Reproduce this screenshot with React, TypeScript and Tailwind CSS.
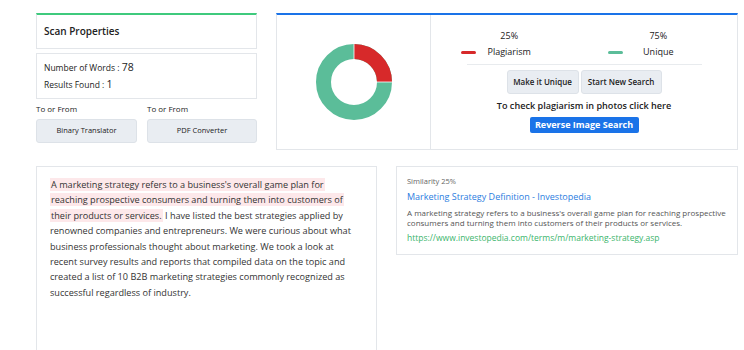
export default function App() {
  const r = 30.5;
  const c = 2 * Math.PI * r;
  return (
    <div className="h-[350px] overflow-hidden bg-white pl-[36px] pr-[6px] pt-[13px] text-[#222] font-['Open_Sans',sans-serif]">
      <div className="flex gap-[19px]">
        {/* left column */}
        <div className="w-[221px] flex flex-col">
          <div className="h-[36px] border border-[#e3e6ea] border-t-2 border-t-[#3fca7d] flex items-center px-[7px]">
            <span className="text-[10px] font-semibold">Scan Properties</span>
          </div>
          <div className="mt-[4px] h-[46px] border border-[#e3e6ea] px-[7px] flex flex-col justify-center text-[8.5px] font-medium leading-[17px]">
            <div>
              Number of Words : <span className="text-[10.5px]">78</span>
            </div>
            <div>
              Results Found : <span className="text-[10.5px]">1</span>
            </div>
          </div>
          <div className="mt-[4px] grid grid-cols-[101px_1fr] gap-x-[10px]">
            <div className="flex flex-col">
              <span className="text-[8px] leading-[12px]">To or From</span>
              <button className="mt-[4px] h-[24px] rounded-[3px] bg-[#e9edf2] border border-[#dde2e8] text-[7.5px] font-medium">
                Binary Translator
              </button>
            </div>
            <div className="flex flex-col">
              <span className="text-[8px] leading-[12px]">To or From</span>
              <button className="mt-[4px] h-[24px] rounded-[3px] bg-[#e9edf2] border border-[#dde2e8] text-[7.5px] font-medium">
                PDF Converter
              </button>
            </div>
          </div>
        </div>

        {/* right card */}
        <div className="flex-1 h-[137px] border border-[#e3e6ea] border-t-2 border-t-[#1a73e8] flex">
          <div className="w-[154px] border-r border-[#e3e6ea] flex items-center justify-center">
            <svg width="78" height="78" viewBox="0 0 78 78">
              <g transform="rotate(-90 39 39)">
                <circle cx="39" cy="39" r={r} fill="none" stroke="#5bbd99" strokeWidth="15" />
                <circle
                  cx="39"
                  cy="39"
                  r={r}
                  fill="none"
                  stroke="#d7292a"
                  strokeWidth="15"
                  strokeDasharray={`${c * 0.25} ${c}`}
                />
              </g>
              <line x1="39" y1="1" x2="39" y2="24" stroke="#fff" strokeWidth="0.8" />
              <line x1="54" y1="39" x2="77" y2="39" stroke="#fff" strokeWidth="0.8" />
            </svg>
          </div>
          <div className="flex-1 flex flex-col items-center pt-[13px]">
            <div className="w-[235px] flex justify-between text-[9px] font-medium pb-[4px] border-b border-[#e8ebee]">
              <div className="flex items-end gap-[12px] -ml-[6px]">
                <span className="w-[15px] h-[3px] rounded-full bg-[#d7292a] mb-[6px]" />
                <div className="flex flex-col items-center leading-[16px]">
                  <span>25%</span>
                  <span>Plagiarism</span>
                </div>
              </div>
              <div className="flex items-end gap-[20px] pr-[28px]">
                <span className="w-[15px] h-[3px] rounded-full bg-[#5bbd99] mb-[6px]" />
                <div className="flex flex-col items-center leading-[16px]">
                  <span>75%</span>
                  <span>Unique</span>
                </div>
              </div>
            </div>
            <div className="mt-[5px] flex gap-[2px]">
              <button className="h-[24px] w-[72px] rounded-[3px] bg-[#e9edf2] border border-[#dde2e8] text-[8px] font-semibold">
                Make it Unique
              </button>
              <button className="h-[24px] w-[81px] rounded-[3px] bg-[#e9edf2] border border-[#dde2e8] text-[8px] font-semibold">
                Start New Search
              </button>
            </div>
            <div className="mt-[5px] text-[9.1px] leading-[13px] font-semibold">
              To check plagiarism in photos click here
            </div>
            <button className="mt-[5px] h-[16px] w-[109px] rounded-[2px] bg-[#1a73e8] text-white text-[9px] font-bold">
              Reverse Image Search
            </button>
          </div>
        </div>
      </div>

      <div className="mt-[16px] flex gap-[19px]">
        <div className="w-[341px] h-[200px] border border-[#e3e6ea] px-[13px] pt-[10px]">
          <p className="text-[9.15px] leading-[15.4px] text-[#333] whitespace-nowrap">
            <span className="bg-[#fde8ea] box-decoration-clone px-[1px]">
              A marketing strategy refers to a business's overall game plan for
              <br />
              reaching prospective consumers and turning them into customers of
              <br />
              their products or services.
            </span>{" "}
            I have listed the best strategies applied by
            <br />
            renowned companies and entrepreneurs. We were curious about what
            <br />
            business professionals thought about marketing. We took a look at
            <br />
            recent survey results and reports that compiled data on the topic and
            <br />
            created a list of 10 B2B marketing strategies commonly recognized as
            <br />
            successful regardless of industry.
          </p>
        </div>
        <div className="flex-1 h-[89px] border border-[#e3e6ea] px-[10px] pt-[8px] whitespace-nowrap">
          <div className="text-[7.5px] leading-[12px] text-[#666]">Similarity 25%</div>
          <div className="mt-[3px] text-[9px] leading-[14px] text-[#2b7de0]">
            Marketing Strategy Definition - Investopedia
          </div>
          <div className="mt-[4px] text-[8px] leading-[10px] text-[#555]">
            A marketing strategy refers to a business's overall game plan for reaching prospective
            <br />
            consumers and turning them into customers of their products or services.
          </div>
          <div className="mt-[4px] text-[8.5px] leading-[12px] text-[#3bb56c]">
            https://www.investopedia.com/terms/m/marketing-strategy.asp
          </div>
        </div>
      </div>
    </div>
  );
}
